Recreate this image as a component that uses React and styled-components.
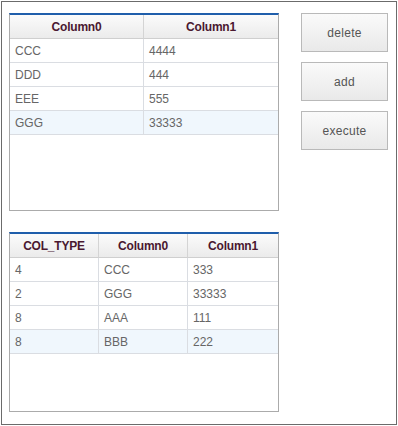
import React from 'react';
import styled, { createGlobalStyle } from 'styled-components';

const GlobalStyle = createGlobalStyle`
    html, body {
        margin: 0;
        padding: 0;
        background: #ffffff;
    }
    body {
        font-family: "Liberation Sans", Arial, sans-serif;
    }
`

const Frame = styled.div`
    box-sizing: border-box;
    margin: 1px;
    width: 396px;
    height: 424px;
    border: 1px solid #6b6b6b;
    padding: 11px 0 0 7px;
    display: flex;
    flex-direction: column;
    gap: 21px;
`
const TopRow = styled.div`
    display: flex;
    align-items: flex-start;
    gap: 22px;
`
const Grid = styled.div`
    box-sizing: border-box;
    width: 270px;
    height: ${p => p.height}px;
    border: 1px solid #ababab;
    border-top: 2px solid #1f5eab;
    background: #fff;
    display: grid;
    grid-template-columns: ${p => p.cols};
    grid-auto-rows: 24px;
    align-content: start;
`
const HeadCell = styled.div`
    box-sizing: border-box;
    height: 24px;
    display: flex;
    align-items: center;
    justify-content: center;
    background: linear-gradient(#fbfbfb, #ebebeb);
    border-bottom: 1px solid #cfcfcf;
    border-right: ${p => (p.last ? 'none' : '1px solid #d4d4d4')};
    font-size: 12px;
    font-weight: bold;
    color: #4a1830;
    letter-spacing: -0.2px;
`
const Cell = styled.div`
    box-sizing: border-box;
    height: 24px;
    display: flex;
    align-items: center;
    padding-left: 5px;
    background: ${p => (p.selected ? '#f0f7fd' : '#fff')};
    border-bottom: 1px solid #dadde2;
    border-right: ${p => (p.last ? 'none' : '1px solid #dadde2')};
    font-size: 12px;
    color: #666;
`
const ButtonColumn = styled.div`
    display: flex;
    flex-direction: column;
    gap: 10px;
`
const ActionButton = styled.button`
    box-sizing: border-box;
    width: 87px;
    height: 39px;
    border: 1px solid #b9b9b9;
    background: linear-gradient(#fafafa, #e9e9e9);
    font-family: "Liberation Sans", Arial, sans-serif;
    font-size: 12px;
    color: #555;
    letter-spacing: 0.3px;
    padding: 0;
    cursor: pointer;
`

const DataGrid = ({ columns, cols, rows, height, selectedIndex }) => (
    <Grid cols={cols} height={height}>
        {columns.map((c, i) => (
            <HeadCell key={c} last={i === columns.length - 1}>{c}</HeadCell>
        ))}
        {rows.map((row, r) =>
            row.map((v, i) => (
                <Cell
                    key={r + '-' + i}
                    selected={r === selectedIndex}
                    last={i === row.length - 1}
                >
                    {v}
                </Cell>
            ))
        )}
    </Grid>
)

const App = () => {
    const topRows = [
        ['CCC', '4444'],
        ['DDD', '444'],
        ['EEE', '555'],
        ['GGG', '33333'],
    ];
    const bottomRows = [
        ['4', 'CCC', '333'],
        ['2', 'GGG', '33333'],
        ['8', 'AAA', '111'],
        ['8', 'BBB', '222'],
    ];

    return (
        <>
            <GlobalStyle />
            <Frame>
                <TopRow>
                    <DataGrid
                        columns={['Column0', 'Column1']}
                        cols="134px 134px"
                        rows={topRows}
                        height={198}
                        selectedIndex={3}
                    />
                    <ButtonColumn>
                        <ActionButton>delete</ActionButton>
                        <ActionButton>add</ActionButton>
                        <ActionButton>execute</ActionButton>
                    </ButtonColumn>
                </TopRow>
                <DataGrid
                    columns={['COL_TYPE', 'Column0', 'Column1']}
                    cols="89px 89px 90px"
                    rows={bottomRows}
                    height={180}
                    selectedIndex={3}
                />
            </Frame>
        </>
    );
}

export default App;
